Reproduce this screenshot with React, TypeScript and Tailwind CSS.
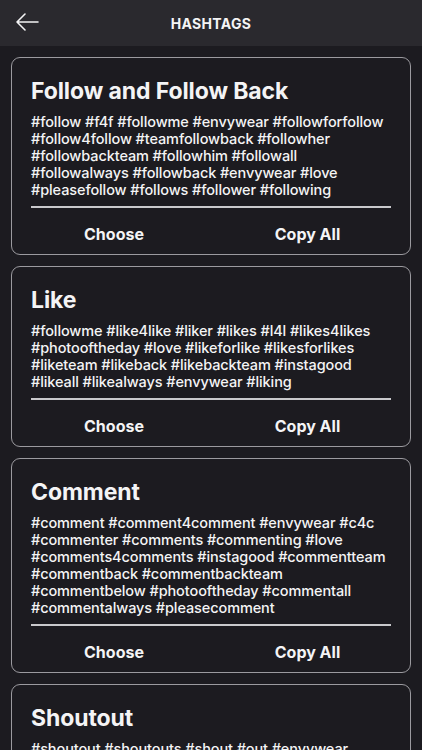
import React from "react";

const cards = [
  {
    title: "Follow and Follow Back",
    lines: [
      "#follow #f4f #followme #envywear #followforfollow",
      "#follow4follow #teamfollowback #followher",
      "#followbackteam #followhim #followall",
      "#followalways #followback #envywear #love",
      "#pleasefollow #follows #follower #following",
    ],
  },
  {
    title: "Like",
    lines: [
      "#followme #like4like #liker #likes #l4l #likes4likes",
      "#photooftheday #love #likeforlike #likesforlikes",
      "#liketeam #likeback #likebackteam #instagood",
      "#likeall #likealways #envywear #liking",
    ],
  },
  {
    title: "Comment",
    lines: [
      "#comment #comment4comment #envywear #c4c",
      "#commenter #comments #commenting #love",
      "#comments4comments #instagood #commentteam",
      "#commentback #commentbackteam",
      "#commentbelow #photooftheday #commentall",
      "#commentalways #pleasecomment",
    ],
  },
  {
    title: "Shoutout",
    lines: [
      "#shoutout #shoutouts #shout #out #envywear",
      "#shoutoutforshoutout #shoutout4shoutout #s4s",
      "#shoutoutpage #shoutouts4shoutouts",
    ],
  },
];

export default function App() {
  return (
    <div
      className="w-[422px] h-[750px] overflow-hidden bg-[#1c1b20] text-[#f4f4f5]"
      style={{ fontFamily: "Inter, 'Noto Sans', sans-serif" }}
    >
      <div className="h-[46px] bg-[#2a292e] relative flex items-center justify-center">
        <svg
          className="absolute left-[15px] top-[12px]"
          width="24"
          height="20"
          viewBox="0 0 24 20"
          fill="none"
          stroke="#f4f4f5"
          strokeWidth="1.6"
          strokeLinecap="round"
          strokeLinejoin="round"
        >
          <path d="M23 10H2M10 2L2 10l8 8" />
        </svg>
        <span className="text-[14px] font-bold tracking-[0.3px]">HASHTAGS</span>
      </div>
      <div className="flex flex-col gap-[11px] px-[11px] pt-[11px]">
        {cards.map((c) => (
          <div
            key={c.title}
            className="border border-[#9b9a9f] rounded-[9px] bg-[#1c1b20] px-[19px] pt-[19px] pb-[8px]"
          >
            <div className="text-[23px] font-bold leading-[28px] tracking-[-0.1px]">{c.title}</div>
            <div className="mt-[8px] text-[14.5px] font-medium leading-[17px] tracking-[-0.1px]">
              {c.lines.map((l) => (
                <div key={l} className="whitespace-nowrap">
                  {l}
                </div>
              ))}
            </div>
            <div className="mt-[8px] h-[2px] bg-[#c9c9cc]" />
            <div className="flex pt-[15px] h-[38px]">
              <div className="w-[168px] text-center text-[16px] font-bold leading-[22px] pr-[2px]">Choose</div>
              <div className="flex-1 text-center text-[16px] font-bold leading-[22px] pl-[25px]">Copy All</div>
            </div>
          </div>
        ))}
      </div>
    </div>
  );
}
